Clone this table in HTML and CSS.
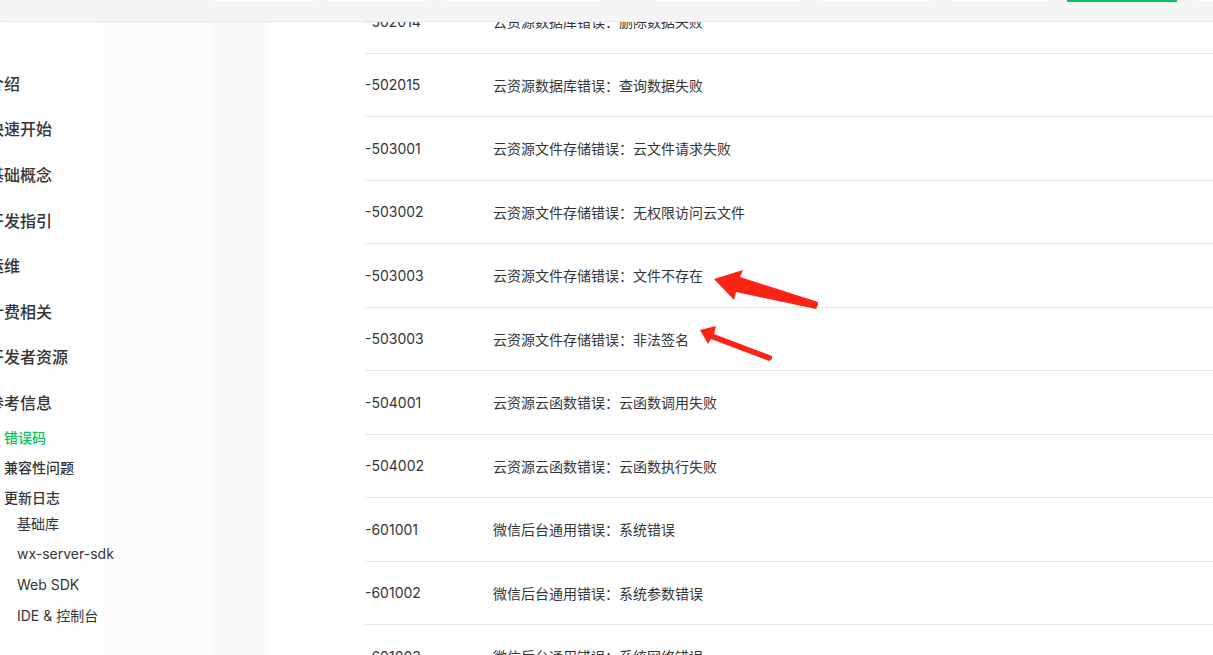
FILE: index.html
```html
<!DOCTYPE html>
<html lang="zh-CN">
<head>
<meta charset="utf-8">
<title>错误码</title>
<link rel="stylesheet" href="styles.css">
</head>
<body>
<div class="page">
  <aside class="sidebar">
    <ul class="nav">
      <li class="nav-item">介绍</li>
      <li class="nav-item">快速开始</li>
      <li class="nav-item">基础概念</li>
      <li class="nav-item">开发指引</li>
      <li class="nav-item">运维</li>
      <li class="nav-item">计费相关</li>
      <li class="nav-item">开发者资源</li>
      <li class="nav-item">参考信息</li>
    </ul>
    <ul class="subnav">
      <li class="sub-item active">错误码</li>
      <li class="sub-item">兼容性问题</li>
      <li class="sub-item">更新日志</li>
    </ul>
    <ul class="subsubnav">
      <li class="subsub-item">基础库</li>
      <li class="subsub-item">wx-server-sdk</li>
      <li class="subsub-item">Web SDK</li>
      <li class="subsub-item">IDE &amp; 控制台</li>
    </ul>
  </aside>
  <main class="content">
    <div class="table">
      <div class="row"><span class="code">-502014</span><span class="desc">云资源数据库错误：删除数据失败</span></div>
      <div class="row"><span class="code">-502015</span><span class="desc">云资源数据库错误：查询数据失败</span></div>
      <div class="row"><span class="code">-503001</span><span class="desc">云资源文件存储错误：云文件请求失败</span></div>
      <div class="row"><span class="code">-503002</span><span class="desc">云资源文件存储错误：无权限访问云文件</span></div>
      <div class="row"><span class="code">-503003</span><span class="desc">云资源文件存储错误：文件不存在</span></div>
      <div class="row"><span class="code">-503003</span><span class="desc">云资源文件存储错误：非法签名</span></div>
      <div class="row"><span class="code">-504001</span><span class="desc">云资源云函数错误：云函数调用失败</span></div>
      <div class="row"><span class="code">-504002</span><span class="desc">云资源云函数错误：云函数执行失败</span></div>
      <div class="row"><span class="code">-601001</span><span class="desc">微信后台通用错误：系统错误</span></div>
      <div class="row"><span class="code">-601002</span><span class="desc">微信后台通用错误：系统参数错误</span></div>
      <div class="row"><span class="code">-601003</span><span class="desc">微信后台通用错误：系统网络错误</span></div>
    </div>
  </main>
</div>
<header class="topbar">
  <span class="tab t1"></span>
  <span class="tab t2"></span>
  <span class="tab t3"></span>
  <span class="tab t4"></span>
  <span class="tab t5"></span>
  <span class="tab t6"></span>
  <span class="tab t7 tab-active"></span>
  <span class="tab t8"></span>
</header>
<svg class="arrows" width="1213" height="655" viewBox="0 0 1213 655" xmlns="http://www.w3.org/2000/svg">
  <polygon fill="#fb2414" points="714,279 743,270 740,277 818,302 818,305 816,309 736,292 734,300"/>
  <polygon fill="#fb2414" points="700,330 716,326 714,334 772,356 772,359 769,361 711,339 708,344"/>
</svg>
</body>
</html>
```

FILE: styles.css
```css
html, body {
  margin: 0;
  padding: 0;
}
body {
  width: 1213px;
  height: 655px;
  overflow: hidden;
  background: #ffffff;
  font-family: "Inter", "Noto Sans CJK SC", sans-serif;
  color: #353535;
  position: relative;
}
ul {
  list-style: none;
  margin: 0;
  padding: 0;
}
.page {
  display: flex;
  height: 655px;
}
.sidebar {
  width: 268px;
  flex: none;
  background: linear-gradient(to right, #ffffff 0px, #fefefe 98px, #fcfcfc 99px, #fcfcfc 211px, #fafafa 212px, #fafafa 268px);
  padding-top: 60px;
  box-sizing: border-box;
}
.nav {
  margin-left: -12px;
}
.nav-item {
  height: 45.6px;
  display: flex;
  align-items: center;
  font-size: 16px;
  font-weight: 500;
  color: #353535;
}
.subnav {
  margin-top: -3px;
}
.sub-item {
  height: 30px;
  display: flex;
  align-items: center;
  padding-left: 4px;
  font-size: 14px;
  font-weight: 500;
  color: #353535;
}
.sub-item.active {
  color: #07c160;
}
.subsubnav {
  margin-top: -4px;
}
.subsub-item {
  height: 30.7px;
  display: flex;
  align-items: center;
  padding-left: 17px;
  font-size: 14px;
  color: #353535;
}
.content {
  flex: 1;
  padding-left: 97px;
}
.table {
  margin-top: -10px;
}
.row {
  height: 63.5px;
  box-sizing: border-box;
  border-bottom: 1px solid #e5e5e5;
  display: flex;
  align-items: center;
  font-size: 14px;
  color: #353535;
}
.code {
  width: 128px;
  flex: none;
}
.desc {
  color: #353535;
}
.topbar {
  position: absolute;
  top: 0;
  left: 0;
  width: 1213px;
  height: 21px;
  background: #f5f5f5;
  border-bottom: 1px solid #e8e8e8;
  display: flex;
  align-items: flex-start;
}
.tab {
  height: 1px;
  background: #ffffff;
  flex: none;
}
.tab-active {
  background: #07c160;
  height: 1.5px;
}
.t1 { margin-left: 213px; width: 103px; }
.t2 { margin-left: 14px; width: 97px; }
.t3 { margin-left: 18px; width: 155px; }
.t4 { margin-left: 55px; width: 144px; }
.t5 { margin-left: 20px; width: 113px; }
.t6 { margin-left: 19px; width: 98px; }
.t7 { margin-left: 18px; width: 110px; }
.t8 { margin-left: 20px; width: 16px; }
.arrows {
  position: absolute;
  top: 0;
  left: 0;
  pointer-events: none;
}
```
